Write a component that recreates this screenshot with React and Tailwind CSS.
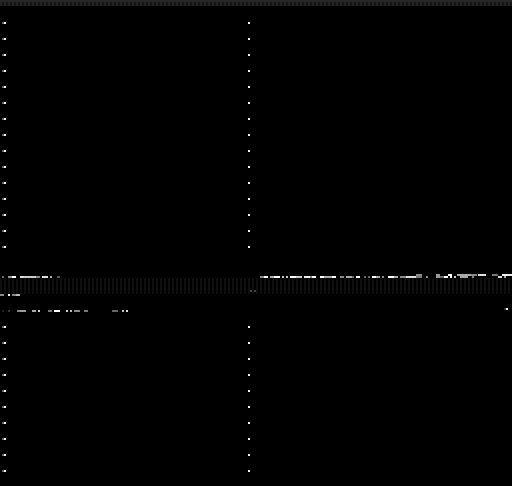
import React from "react";

const leftTop = [
  [2, 2, "#666"], [8, 4, "#999"], [12, 4, "#fff"], [20, 4, "#ddd"], [24, 12, "#ccc"],
  [36, 4, "#888"], [42, 6, "#ddd"], [50, 2, "#aaa"], [57, 3, "#555"],
];
const rightTop = [
  [260, 4, "#888"], [264, 4, "#fff"], [270, 4, "#aaa"], [274, 6, "#fff"], [282, 2, "#ccc"],
  [286, 2, "#ccc"], [290, 6, "#fff"], [296, 6, "#ccc"], [304, 6, "#eee"], [310, 2, "#888"],
  [312, 4, "#fff"], [320, 4, "#fff"], [324, 8, "#aaa"], [332, 4, "#fff"], [340, 4, "#888"],
  [346, 6, "#aaa"], [352, 2, "#666"], [356, 4, "#fff"], [364, 2, "#666"], [368, 2, "#666"],
  [372, 4, "#fff"], [376, 4, "#aaa"], [382, 2, "#888"], [388, 6, "#fff"], [394, 4, "#aaa"],
  [400, 6, "#888"], [406, 10, "#ddd"], [416, 6, "#777"], [426, 2, "#888"], [436, 4, "#999"],
  [440, 4, "#666"], [444, 4, "#fff"], [450, 2, "#fff"], [454, 2, "#ccc"], [460, 8, "#aaa"],
  [472, 2, "#888"], [498, 4, "#ddd"], [504, 2, "#aaa"],
];
const rightUpper = [
  [416, 6, "#888"], [436, 4, "#999"], [448, 4, "#fff"], [457, 14, "#aaa"], [471, 6, "#888"],
  [478, 8, "#ddd"], [492, 6, "#777"], [502, 10, "#eee"],
];
const status = [
  [0, 4, "#888"], [8, 2, "#fff"], [12, 4, "#888"], [16, 4, "#bbb"],
];
const tabs = [
  [2, 2, "#222"], [8, 2, "#333"], [17, 3, "#888"], [20, 6, "#999"], [32, 4, "#aaa"],
  [38, 2, "#ccc"], [48, 4, "#777"], [54, 6, "#fff"], [66, 2, "#ccc"], [70, 2, "#bbb"],
  [74, 6, "#888"], [84, 4, "#777"], [112, 6, "#666"], [122, 2, "#bbb"], [126, 2, "#ddd"],
];

function Pixels({ items, start = 0, className = "h-[2px]" }) {
  let pos = start;
  return (
    <div className={"flex " + className}>
      {items.map(([x, w, c]) => {
        const gap = x - pos;
        pos = x + w;
        return <div key={x} className="h-full shrink-0" style={{ marginLeft: gap, width: w, background: c }} />;
      })}
    </div>
  );
}

function Gutter({ count }) {
  const rows = Array.from({ length: count });
  return (
    <div className="flex">
      <div className="w-[248px] pl-[2px] flex flex-col">
        {rows.map((_, i) => (
          <div key={i} className="h-[16px] flex">
            <div className="w-[2px] h-[2px] bg-[#666]" />
            <div className="w-[2px] h-[2px] bg-white" />
          </div>
        ))}
      </div>
      <div className="flex flex-col">
        {rows.map((_, i) => (
          <div key={i} className="h-[16px]">
            <div className="w-[2px] h-[2px] bg-white" />
          </div>
        ))}
      </div>
    </div>
  );
}

export default function App() {
  return (
    <div className="w-[512px] h-[486px] bg-black overflow-hidden flex flex-col">
      <div className="h-[2px] bg-[#262626]" />
      <div className="h-[4px] bg-[repeating-linear-gradient(90deg,#242424_0,#242424_2px,#141414_2px,#141414_4px)]" />
      <div className="pt-[16px] pb-[12px]">
        <Gutter count={15} />
      </div>
      <Pixels items={rightUpper} />
      <div className="h-[2px] flex">
        <Pixels items={leftTop} className="h-[2px] w-[260px] shrink-0" />
        <Pixels items={rightTop} start={260} />
      </div>
      <div className="h-[16px] relative bg-[repeating-linear-gradient(90deg,#0f0f0f_0,#0f0f0f_2px,#000_2px,#000_4px)]">
        <div className="absolute left-[250px] top-[12px] flex gap-[2px]">
          <div className="w-[2px] h-[2px] bg-[#444]" />
          <div className="w-[2px] h-[2px] bg-[#444]" />
        </div>
      </div>
      <Pixels items={status} />
      <div className="h-[14px] flex justify-end items-end pr-[4px]">
        <div className="w-[2px] h-[2px] bg-[#333]" />
        <div className="w-[2px] h-[2px] bg-white" />
      </div>
      <Pixels items={tabs} />
      <div className="pt-[14px]">
        <Gutter count={10} />
      </div>
    </div>
  );
}
